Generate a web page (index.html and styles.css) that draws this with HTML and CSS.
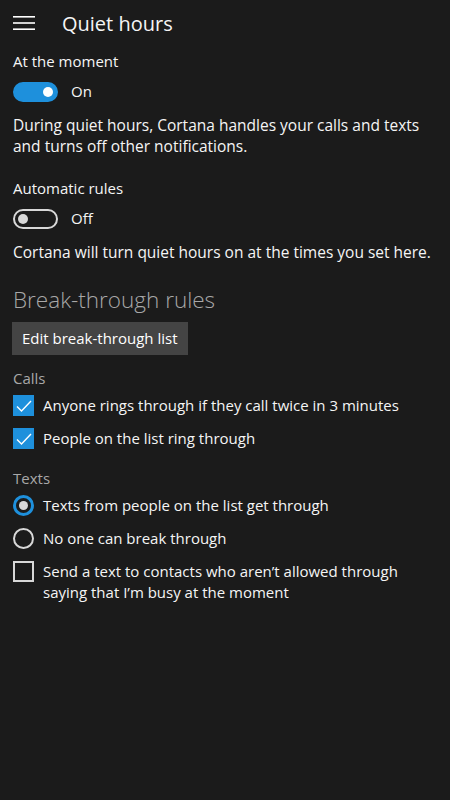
FILE: index.html
```html
<!DOCTYPE html>
<html lang="en">
<head>
    <meta charset="UTF-8">
    <meta name="viewport" content="width=device-width, initial-scale=1.0">
    <title>Quiet hours</title>
    <link rel="stylesheet" href="styles.css">
</head>
<body>
    <header class="topbar">
        <svg class="menu-icon" width="22" height="14" viewBox="0 0 22 14">
            <rect x="0" y="0" width="22" height="1.6" fill="#fff"/>
            <rect x="0" y="6.2" width="22" height="1.6" fill="#fff"/>
            <rect x="0" y="12.4" width="22" height="1.6" fill="#fff"/>
        </svg>
        <h1>Quiet hours</h1>
    </header>

    <main class="content">
        <div class="setting">
            <div class="label">At the moment</div>
            <div class="toggle-row">
                <span class="toggle on"><span class="knob"></span></span>
                <span>On</span>
            </div>
        </div>
        <p class="desc">During quiet hours, Cortana handles your calls and texts and turns off other notifications.</p>

        <div class="setting">
            <div class="label">Automatic rules</div>
            <div class="toggle-row">
                <span class="toggle"><span class="knob"></span></span>
                <span>Off</span>
            </div>
        </div>
        <p class="desc">Cortana will turn quiet hours on at the times you set here.</p>

        <h2>Break-through rules</h2>
        <button class="btn">Edit break-through list</button>

        <div class="group-title">Calls</div>
        <div class="option">
            <span class="check checked">
                <svg width="16" height="12" viewBox="0 0 16 12"><path d="M1 6.5 L5.5 11 L15 1" fill="none" stroke="#fff" stroke-width="1.4"/></svg>
            </span>
            <span>Anyone rings through if they call twice in 3 minutes</span>
        </div>
        <div class="option">
            <span class="check checked">
                <svg width="16" height="12" viewBox="0 0 16 12"><path d="M1 6.5 L5.5 11 L15 1" fill="none" stroke="#fff" stroke-width="1.4"/></svg>
            </span>
            <span>People on the list ring through</span>
        </div>

        <div class="group-title">Texts</div>
        <div class="option">
            <span class="radio selected"><span class="dot"></span></span>
            <span>Texts from people on the list get through</span>
        </div>
        <div class="option">
            <span class="radio"></span>
            <span>No one can break through</span>
        </div>
        <div class="option multi">
            <span class="check"></span>
            <span>Send a text to contacts who aren’t allowed through saying that I’m busy at the moment</span>
        </div>
    </main>
</body>
</html>
```

FILE: styles.css
```css
body {
    margin: 0;
    background: #1b1b1b;
    color: #f5f5f5;
    font-family: "Open Sans", "Noto Sans", sans-serif;
    font-size: 15px;
    line-height: 21px;
}
.topbar {
    display: flex;
    align-items: center;
    height: 46px;
    padding: 0 13px;
}
.menu-icon {
    margin-right: 27px;
}
.topbar h1 {
    margin: 0;
    font-size: 20px;
    font-weight: 400;
}
.content {
    padding: 5px 10px 0 13px;
}
.label {
    margin-bottom: 9px;
}
.toggle-row {
    display: flex;
    align-items: center;
    gap: 13px;
}
.toggle {
    display: flex;
    align-items: center;
    box-sizing: border-box;
    width: 45px;
    height: 20px;
    border: 2px solid #d8d8d8;
    border-radius: 10px;
    padding: 0 3px;
}
.toggle .knob {
    width: 10px;
    height: 10px;
    border-radius: 50%;
    background: #d8d8d8;
}
.toggle.on {
    background: #1e90dc;
    border-color: #1e90dc;
    justify-content: flex-end;
}
.toggle.on .knob {
    background: #fff;
}
.desc {
    margin: 13px 0 21px;
    font-size: 15.5px;
}
h2 {
    margin: 21px 0 6px;
    font-size: 22.5px;
    line-height: 32px;
    font-weight: 300;
    color: #a8a8a8;
}
.btn {
    display: block;
    box-sizing: border-box;
    height: 33px;
    background: #444444;
    color: #fff;
    border: none;
    font-family: inherit;
    font-size: 15px;
    line-height: 21px;
    padding: 0 10px;
    margin: 0 0 13px -1px;
}
.group-title {
    color: #a8a8a8;
    margin-bottom: 6px;
    margin-top: 0;
}
.option {
    display: flex;
    align-items: center;
    gap: 9px;
    margin-bottom: 12px;
}
.option.multi {
    align-items: flex-start;
}
.option + .group-title {
    margin-top: 19px;
}
.check {
    flex: none;
    display: flex;
    align-items: center;
    justify-content: center;
    box-sizing: border-box;
    width: 21px;
    height: 21px;
    border: 2px solid #d8d8d8;
}
.check.checked {
    background: #1e90dc;
    border-color: #1e90dc;
}
.radio {
    flex: none;
    display: flex;
    align-items: center;
    justify-content: center;
    box-sizing: border-box;
    width: 21px;
    height: 21px;
    border: 2px solid #d8d8d8;
    border-radius: 50%;
}
.radio.selected {
    border: 3px solid #1e90dc;
}
.radio .dot {
    width: 9px;
    height: 9px;
    border-radius: 50%;
    background: #d8d8d8;
}
```
